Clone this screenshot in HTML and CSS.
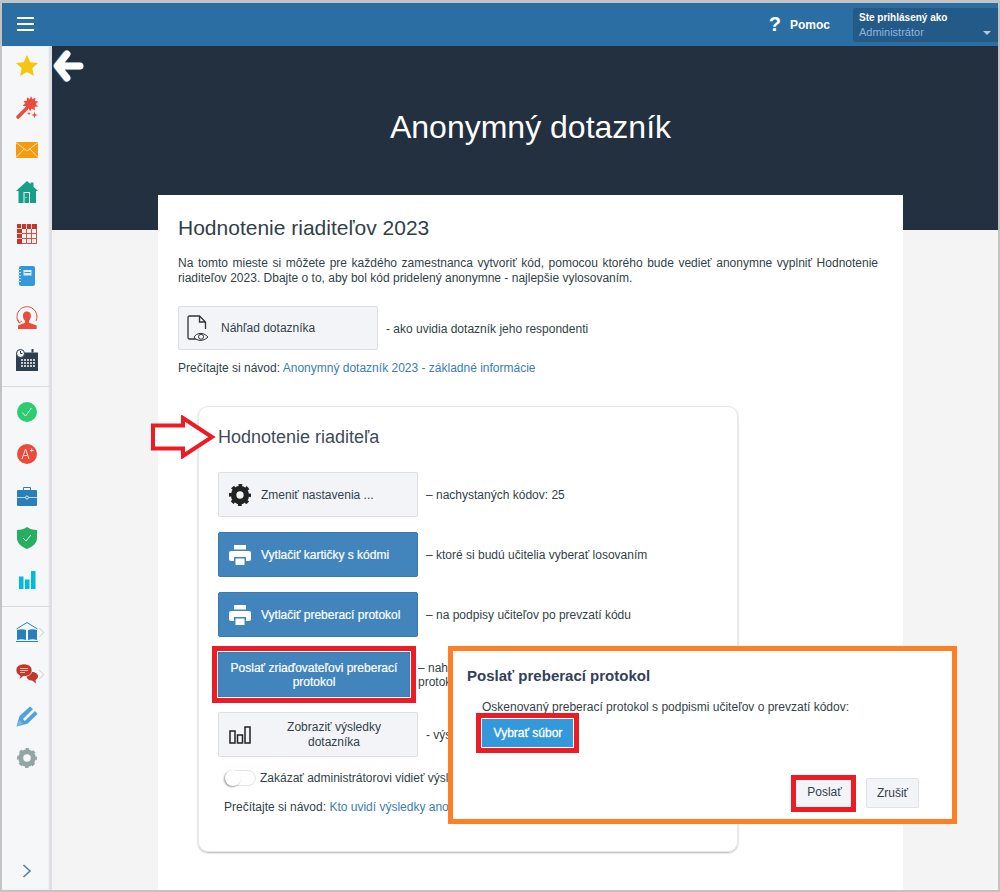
FILE: index.html
```html
<!DOCTYPE html>
<html lang="sk">
<head>
<meta charset="utf-8">
<title>Anonymný dotazník</title>
<link rel="stylesheet" href="styles.css">
</head>
<body>
<div class="shot">
  <header class="topbar">
    <button class="burger" aria-label="Menu"><span></span><span></span><span></span></button>
    <div class="top-right">
      <span class="help-q">?</span>
      <span class="help">Pomoc</span>
      <div class="user">
        <div class="user-label">Ste prihlásený ako</div>
        <div class="user-role">Administrátor</div>
        <span class="caret"></span>
      </div>
    </div>
  </header>
  <div class="layout">
    <nav class="sidebar">
      <div class="group">
        <div class="item"><svg width="24" height="24" viewBox="0 0 24 24"><path fill="#f5c60f" d="M12 1l3.300 7.200 7.700.9-5.700 5.200 1.600 7.700-6.900-3.900-6.900 3.900 1.600-7.700L1 9.100l7.700-.9z"/></svg></div>
        <div class="item"><svg width="24" height="24" viewBox="0 0 24 24"><path fill="none" stroke="#ea4c3c" stroke-width="3.600" stroke-linecap="round" d="M3 21l9-9"/><path fill="#ea4c3c" d="M16 0l1.400 3.300 3-1.800-.4 3.600 3.500.4-2.700 2.400 2.400 2.700-3.500.2.100 3.600-3-2-1.800 3-1.400-3.300-3 1.700.4-3.500-3.500-.5 2.700-2.300L8.500 5l3.500-.2-.1-3.500 3 1.900z"/><path fill="#ea4c3c" d="M19.500 15.500l.8 2.700 2.700.8-2.700.8-.8 2.700-.8-2.700-2.700-.8 2.700-.8zM14 15.500l.5 1.500 1.500.5-1.500.5-.5 1.500-.5-1.500-1.500-.5 1.500-.5z"/></svg></div>
        <div class="item"><svg width="22" height="16" viewBox="0 0 22 16"><rect width="22" height="16" fill="#f39c12"/><path fill="none" stroke="#fde3b5" stroke-width="1" d="M0 .5l11 8.500L22 .5M0 15.500l8-8.500M22 15.500L14 7"/></svg></div>
        <div class="item"><svg width="22" height="22" viewBox="0 0 22 22"><path fill="#16a085" d="M11 0l3.500 3V1.500h3v4.200l4.500 4.300h-2v12H2.500V10H0z"/><rect x="7.500" y="11" width="6.500" height="11" fill="#f6f7f9"/><rect x="8.500" y="12" width="4.500" height="10" fill="#16a085"/><rect x="9.500" y="16" width="1" height="1" fill="#f6f7f9"/></svg></div>
        <div class="item"><svg width="20" height="20" viewBox="0 0 20 20"><rect width="20" height="20" fill="#c0392b"/><rect x="5" y="5" width="15" height="15" fill="#fbeeed"/><path fill="none" stroke="#f3cfca" stroke-width="1" d="M0 4.500h5M0 9.500h5M0 14.500h5M4.500 0v5M9.500 0v5M14.500 0v5"/><path fill="none" stroke="#c9574b" stroke-width="1" d="M5 9.500h15M5 14.500h15M9.500 5v15M14.500 5v15M19.500 5v15M5 19.500h15"/></svg></div>
        <div class="item"><svg width="18" height="20" viewBox="0 0 18 20"><rect x="1" width="16" height="20" rx="2" fill="#3498db"/><rect x="5.500" y="4" width="8" height="5.500" fill="#d9ecf9"/><rect x="6.500" y="6" width="6" height="1" fill="#3498db"/><path stroke="#b9dcf3" stroke-width="1" d="M0 3.500h3M0 6.500h3M0 9.500h3M0 12.500h3M0 15.500h3"/></svg></div>
        <div class="item"><svg width="24" height="24" viewBox="0 0 24 24"><path fill="none" stroke="#e74c3c" stroke-width="1" d="M3.500 16A10 10 0 1 1 21 15M3 13.500l1 3.500 3-2"/><path fill="#e74c3c" d="M11.700 5.500c3 0 4.500 2.300 4.200 5-.2 2-1 3.300-1.900 4.200v2l7.700 2.800V23H3v-3.500l7-2.800v-2c-1-.9-1.800-2.200-2-4.200-.3-2.700 1.200-5 3.700-5z"/></svg></div>
        <div class="item"><svg width="22" height="22" viewBox="0 0 22 22"><path fill="#2c3e50" d="M0 3.500h22V22H0z"/><rect x="15.500" y="0" width="2" height="3.500" fill="#2c3e50"/><circle cx="4.500" cy="4.500" r="4" fill="#f6f7f9" stroke="#2c3e50"/><path stroke="#2c3e50" fill="none" d="M4.500 2v2.500h2"/><path fill="none" stroke="#c8ced4" stroke-width="2" stroke-dasharray="2 1" d="M5 11h14M5 14h14M5 17h14"/></svg></div>
      </div>
      <div class="group">
        <div class="item"><svg width="20" height="20" viewBox="0 0 20 20"><circle cx="10" cy="10" r="10" fill="#2ecc71"/><path fill="none" stroke="#d8f6e4" stroke-width="1" d="M5.500 10.500l3 3.500 6-8"/></svg></div>
        <div class="item"><svg width="20" height="20" viewBox="0 0 20 20"><circle cx="10" cy="10" r="10" fill="#e74c3c"/><path fill="none" stroke="#fbdcd8" stroke-width="1" d="M5 15l3.500-10L12 15M6.200 11.500h4.500M13 6.500h3.500M14.700 4.500v3.500"/></svg></div>
        <div class="item"><svg width="20" height="19" viewBox="0 0 20 19"><path fill="none" stroke="#2980b9" d="M6.500 3.500v-3h7v3"/><rect y="3" width="20" height="16" rx="1" fill="#2980b9"/><path stroke="#b5d5ec" d="M0 10.500h20"/><circle cx="10" cy="10.500" r="1.500" fill="#2980b9" stroke="#d8e9f5"/></svg></div>
        <div class="item"><svg width="20" height="22" viewBox="0 0 20 22"><path fill="#27ae60" d="M10 0c2.500 2 6 3 10 3v8c0 5-4 8.500-10 11C4 19.500 0 16 0 11V3c4 0 7.500-1 10-3z"/><path fill="none" stroke="#d8f6e4" d="M6 11l3 3 5-6"/></svg></div>
        <div class="item"><svg width="18" height="18" viewBox="0 0 18 18"><path fill="#00bcd9" d="M1 5.500h4.500V18H1zM7 8.500h4.500V18H7zM13 0h4.500v18H13z"/></svg></div>
      </div>
      <div class="group">
        <div class="item chev"><svg width="22" height="20" viewBox="0 0 22 20"><path fill="#2980b9" d="M1 8c3-1 6-1 9 0v10c-3-1-6-1-9 0zM21 8c-3-1-6-1-9 0v10c3-1 6-1 9 0z"/><path fill="none" stroke="#2980b9" d="M.5 7L11 .5 21.500 7M0 19.500h22"/></svg></div>
        <div class="item chev"><svg width="22" height="20" viewBox="0 0 22 20"><path fill="#c0392b" d="M16 8c3.300 0 6 1.700 6 4.300 0 1.700-1 3-2.500 3.700l.5 3.500-3.500-2.800c-3 0-6-1.700-6-4.400C10.500 9.700 13.500 8 16 8z"/><path fill="#c0392b" stroke="#f6f7f9" stroke-width=".7" d="M8 0c4.500 0 8 2.300 8 6.300 0 3.800-3.500 6.200-8 6.200h-1l-3.500 3 .5-3.600C1.500 10.800 0 8.700 0 6.300 0 2.300 3.500 0 8 0z"/><path stroke="#eeb3ac" d="M4 4.500h8M4 6.500h8M4 8.500h5"/></svg></div>
        <div class="item"><svg width="22" height="22" viewBox="0 0 22 22"><path fill="#4fa1df" d="M.5 21.500L3.500 11 14 1.500l3 2.500L7 14l1.800 2L19 6l2.500 3-10 9.800z"/><path fill="#a9d2f0" d="M3.500 15l3.500 3.500-6.500 3z" opacity=".45"/></svg></div>
        <div class="item"><svg width="20" height="20" viewBox="0 0 24 24"><circle cx="12" cy="12" r="7.500" fill="none" stroke="#95a5a6" stroke-width="6"/><circle cx="12" cy="12" r="10.500" fill="none" stroke="#95a5a6" stroke-width="3" stroke-dasharray="4.100 4.150" stroke-dashoffset="2"/></svg></div>
      </div>
      <div class="collapse"><svg width="10" height="14" viewBox="0 0 10 14"><path fill="none" stroke="#5d7f9f" stroke-width="1.600" d="M1.500 1l6.500 6-6.500 6"/></svg></div>
    </nav>
    <main class="main">
      <section class="hero"><h1 class="hero-title">Anonymný dotazník</h1></section>
      <section class="card">
        <h2 class="card-title">Hodnotenie riaditeľov 2023</h2>
        <p class="intro">Na tomto mieste si môžete pre každého zamestnanca vytvoriť kód, pomocou ktorého bude vedieť anonymne vyplniť Hodnotenie riaditeľov 2023. Dbajte o to, aby bol kód pridelený anonymne - najlepšie vylosovaním.</p>
        <div class="row">
          <a class="btn btn-light btn-top"><span class="btn-icon"><svg width="30" height="32" viewBox="0 0 30 32"><path fill="none" stroke="#333" stroke-width="1.300" d="M14 27H4.500a1.500 1.500 0 0 1-1.500-1.500V5.500A1.500 1.500 0 0 1 4.500 4h10l6 6v7M14.500 4v6h6"/><path fill="#f3f5f9" stroke="#333" d="M9 25c2.500-4 9-5.500 14 0-5 5-11.500 4-14 0z"/><circle cx="16" cy="24.800" r="2.500" fill="none" stroke="#333"/></svg></span><span class="btn-text left">Náhľad dotazníka</span></a>
          <span class="desc">- ako uvidia dotazník jeho respondenti</span>
        </div>
        <p class="guide">Prečítajte si návod: <a class="link">Anonymný dotazník 2023 - základné informácie</a></p>
        <section class="inner">
          <h3 class="inner-title">Hodnotenie riaditeľa</h3>
          <div class="rows">
            <div class="row">
              <a class="btn btn-light"><span class="btn-icon"><svg width="22" height="22" viewBox="0 0 24 24"><circle cx="12" cy="12" r="7" fill="none" stroke="#222" stroke-width="6"/><circle cx="12" cy="12" r="10.500" fill="none" stroke="#222" stroke-width="3" stroke-dasharray="4.100 4.150" stroke-dashoffset="2"/></svg></span><span class="btn-text left">Zmeniť nastavenia ...</span></a>
              <span class="desc">– nachystaných kódov: 25</span>
            </div>
            <div class="row">
              <a class="btn btn-blue"><span class="btn-icon"><svg width="22" height="20" viewBox="0 0 22 20"><path fill="#fff" d="M5 0h12v4.500H5zM2 6h18a2 2 0 0 1 2 2v6a2 2 0 0 1-2 2h-3v-4H5v4H2a2 2 0 0 1-2-2V8a2 2 0 0 1 2-2zM6.500 13.500h9V20h-9z"/></svg></span><span class="btn-text left strong">Vytlačiť kartičky s kódmi</span></a>
              <span class="desc">– ktoré si budú učitelia vyberať losovaním</span>
            </div>
            <div class="row">
              <a class="btn btn-blue"><span class="btn-icon"><svg width="22" height="20" viewBox="0 0 22 20"><path fill="#fff" d="M5 0h12v4.500H5zM2 6h18a2 2 0 0 1 2 2v6a2 2 0 0 1-2 2h-3v-4H5v4H2a2 2 0 0 1-2-2V8a2 2 0 0 1 2-2zM6.500 13.500h9V20h-9z"/></svg></span><span class="btn-text left strong">Vytlačiť preberací protokol</span></a>
              <span class="desc">– na podpisy učiteľov po prevzatí kódu</span>
            </div>
            <div class="row">
              <a class="btn btn-blue btn-narrow marked"><span class="btn-text strong">Poslať zriaďovateľovi preberací protokol</span></a>
              <span class="desc desc-clip">– nahrajte<br>protokol</span>
            </div>
            <div class="row">
              <a class="btn btn-light"><span class="btn-icon"><svg width="22" height="18" viewBox="0 0 22 18"><path fill="none" stroke="#222" stroke-width="1.500" d="M1 5h5v12H1zM8.500 9h5v8h-5zM16 1h5v16h-5z"/></svg></span><span class="btn-text wrap">Zobraziť výsledky dotazníka</span></a>
              <span class="desc desc-clip short">- výsledky</span>
            </div>
          </div>
          <div class="toggle-row"><span class="toggle"><span class="knob"></span></span><span class="desc desc-clip long">Zakázať administrátorovi vidieť výsledky</span></div>
          <p class="guide guide-inner">Prečítajte si návod: <a class="link">Kto uvidí výsledky anonymného dotazníka</a></p>
        </section>
      </section>
    </main>
  </div>
  <svg class="back-arrow" width="32" height="32" viewBox="0 0 32 32"><path fill="none" stroke="#fff" stroke-width="7" stroke-linecap="round" stroke-linejoin="round" d="M15 4L5.500 16 15 28M6 16h22"/></svg>
  <svg class="red-arrow" width="66" height="44" viewBox="0 0 66 44"><path fill="#fff" stroke="#ed1c24" stroke-width="4" d="M2 10.500h30V3l29 19-29 19v-7.500H2z"/></svg>
  <aside class="modal">
    <h4 class="modal-title">Poslať preberací protokol</h4>
    <p class="modal-text">Oskenovaný preberací protokol s podpismi učiteľov o prevzatí kódov:</p>
    <a class="file-btn marked-tight">Vybrať súbor</a>
    <div class="modal-foot">
      <a class="foot-btn send marked-tight">Poslať</a>
      <a class="foot-btn">Zrušiť</a>
    </div>
  </aside>
</div>
</body>
</html>
```
FILE: styles.css
```css
* { box-sizing: border-box; }
html, body { margin: 0; padding: 0; }
body { font-family: "Liberation Sans", Arial, sans-serif; font-size: 12px; color: #333f48; }
.shot { position: relative; width: 1000px; height: 892px; overflow: hidden; border-top: 3px solid #c3c3c3; border-left: 2px solid #c3c3c3; border-right: 2px solid #c3c3c3; border-bottom: 2px solid #c3c3c3; display: flex; flex-direction: column; background: #f4f4f4; }
.topbar { height: 43px; flex: none; background: #2b6ea3; display: flex; align-items: center; justify-content: space-between; position: relative; z-index: 2; }
.burger { width: 17px; height: 14px; margin: -1px 0 0 15px; padding: 0; border: 0; background: none; display: flex; flex-direction: column; justify-content: space-between; }
.burger span { display: block; height: 2px; background: #fff; }
.top-right { display: flex; align-items: center; height: 100%; }
.help-q { font-size: 20px; font-weight: 700; color: #fff; margin-right: 9px; }
.help { font-size: 12px; font-weight: 700; color: #fff; margin-right: 23px; }
.user { position: relative; width: 145px; height: 34px; padding: 2px 6px; background: #245a87; border-radius: 3px 0 0 3px; font-size: 11px; line-height: 15px; }
.user-label { font-size: 10px; font-weight: 700; color: #fff; }
.user-role { color: #8db4dc; }
.caret { position: absolute; right: 7px; top: 23px; border: 4px solid transparent; border-top: 4px solid #b6c9dc; border-bottom: 0; }
.layout { flex: 1; display: flex; min-height: 0; }
.sidebar { width: 50px; flex: none; background: #f6f7f9; box-shadow: inset -2px 0 2px #dcdee2; border-right: 1px solid #dddfe3; display: flex; flex-direction: column; position: relative; }
.group { padding-bottom: 5px; border-bottom: 1px solid #d9dbdf; margin-bottom: 4px; }
.group:first-child { margin-top: -1px; }
.group:nth-child(3) { border-bottom: 0; margin-bottom: 0; }
.item { height: 42px; display: flex; align-items: center; justify-content: center; position: relative; }
.chev::after { content: ""; position: absolute; left: 34px; top: 18px; width: 6px; height: 6px; border-top: 1px solid #d4d7dc; border-right: 1px solid #d4d7dc; transform: rotate(45deg); }
.collapse { margin-top: auto; height: 38px; display: flex; align-items: center; justify-content: center; }
.main { flex: 1; min-width: 0; }
.hero { height: 184px; background: #22303f; padding: 61px 0 0 106px; }
.hero-title { width: 745px; margin: 0; text-align: center; font-size: 32px; line-height: 40px; font-weight: 400; color: #fff; }
.card { width: 745px; margin: -35px 0 0 106px; padding: 20px; height: 700px; background: #fff; }
.card-title { margin: 0; font-size: 21px; line-height: 26px; font-weight: 400; color: #333f48; }
.intro { width: 700px; margin: 15px 0 20px; line-height: 15px; text-align: justify; }
.row { display: flex; align-items: center; gap: 8px; }
.btn { flex: none; display: flex; align-items: center; width: 200px; height: 45px; border-radius: 2px; font-size: 12px; line-height: 14px; }
.btn-top { height: 44px; margin-bottom: 1px; }
.btn-light { background: #f3f4f8; border: 1px solid #dedfe3; color: #333f48; }
.btn-blue { background: #4285bd; border: 1px solid #3c79ad; color: #fff; }
.btn-icon { width: 42px; flex: none; display: flex; justify-content: center; }
.btn-text { flex: 1; text-align: center; }
.btn-text.left { text-align: left; }
.btn-text.wrap { padding-right: 10px; line-height: 15px; }
.btn-text.strong { -webkit-text-stroke: 0.2px #fff; }
.btn-narrow { width: 192px; padding: 0 10px; }
.marked { outline: 5px solid #ed1c24; outline-offset: 1px; border-radius: 0; }
.desc { white-space: nowrap; }
.desc-clip { width: 30px; overflow: hidden; line-height: 14px; }
.desc-clip.short { width: 22px; }
.desc-clip.long { width: 188px; }
.guide { margin: 10px 0 30px; line-height: 15px; }
.link { color: #3a7db5; }
.inner { width: 540px; height: 446px; margin-left: 20px; padding: 19px; border: 1px solid #e6e7ea; border-radius: 10px; box-shadow: 0 1px 2px #b4b4b4; }
.inner-title { margin: 0 0 24px; font-size: 18px; line-height: 22px; font-weight: 400; color: #3f4a5a; }
.rows { display: flex; flex-direction: column; gap: 15px; }
.toggle-row { display: flex; align-items: center; gap: 4px; margin: 13px 0 0 7px; height: 16px; }
.toggle { position: relative; width: 31px; height: 16px; border: 1px solid #e3e4e8; border-radius: 8px; background: #fff; }
.knob { position: absolute; left: -1px; top: -1px; width: 16px; height: 16px; border-radius: 50%; background: #fff; box-shadow: -1px 1px 2px #9a9a9a; }
.guide-inner { margin: 14px 0 0 6px; }
.back-arrow { position: absolute; left: 50px; top: 47px; filter: drop-shadow(-0.5px 0 0 #3b86d6); }
.red-arrow { position: absolute; left: 149px; top: 412px; }
.modal { position: absolute; left: 446px; top: 643px; width: 509px; height: 178px; background: #fff; border: 5px solid #ff7f27; padding: 16px 14px 0; z-index: 3; }
.modal-title { margin: 0; font-size: 15px; line-height: 18px; font-weight: 700; color: #33415a; }
.modal-text { margin: 15px 0 4px 15px; line-height: 14px; }
.file-btn { display: block; width: 93px; height: 30px; margin-left: 14px; border: 1px solid #fff; background: #3498db; color: #fff; -webkit-text-stroke: 0.3px #fff; line-height: 28px; text-align: center; padding-left: 1px; }
.marked-tight { outline: 5px solid #ed1c24; }
.modal-foot { position: absolute; right: 33px; bottom: 11px; display: flex; align-items: center; gap: 15px; }
.foot-btn { display: block; width: 53px; height: 30px; border: 1px solid #e2e3e8; border-radius: 2px; background: #f3f4f8; color: #333f48; line-height: 28px; text-align: center; }
.send { width: 55px; height: 27px; line-height: 25px; border: 0; border-radius: 0; padding-left: 2px; }
```
